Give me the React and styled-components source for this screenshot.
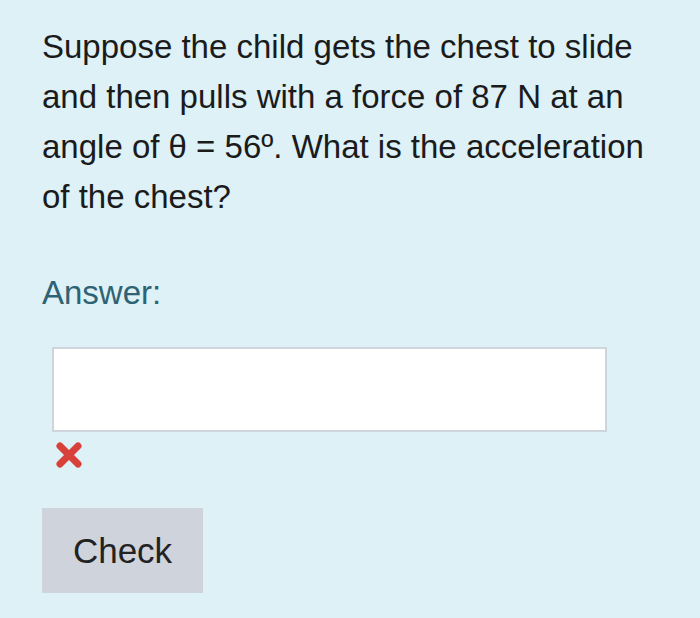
import React from "react";
import styled, { createGlobalStyle } from "styled-components";

const Global = createGlobalStyle`
  html, body {
    margin: 0;
    padding: 0;
    background: #ddf1f7;
  }
  body {
    font-family: "Liberation Sans", Arial, sans-serif;
  }
`;

const Page = styled.div`
  width: 700px;
  height: 618px;
  box-sizing: border-box;
  padding: 22px 20px 0 42px;
  background: #ddf1f7;
  overflow: hidden;
`;

const Question = styled.p`
  margin: 0;
  font-size: 33px;
  line-height: 50px;
  color: #1b1b1b;
  white-space: nowrap;
`;

const Label = styled.div`
  margin-top: 51px;
  font-size: 33px;
  line-height: 40px;
  color: #2d6373;
`;

const Field = styled.input`
  display: block;
  box-sizing: border-box;
  margin: 34px 0 0 10px;
  width: 555px;
  height: 85px;
  border: 2px solid #cfd5dd;
  background: #fff;
  outline: none;
`;

const Feedback = styled.div`
  margin: 9px 0 0 13px;
  height: 28px;
  display: flex;
  align-items: center;
`;

const Button = styled.button`
  margin-top: 39px;
  width: 161px;
  height: 85px;
  border: none;
  background: #cfd3dc;
  font-family: "Liberation Sans", Arial, sans-serif;
  font-size: 35px;
  color: #222;
  cursor: pointer;
`;

const Cross = () => (
  <svg width="28" height="28" viewBox="0 0 28 28">
    <path d="M5 5 L23 23 M23 5 L5 23" stroke="#d8403a" strokeWidth="7" strokeLinecap="round" />
  </svg>
);

export default function App() {
  return (
    <Page>
      <Global />
      <Question>
        Suppose the child gets the chest to slide
        <br />
        and then pulls with a force of 87 N at an
        <br />
        angle of θ = 56º. What is the acceleration
        <br />
        of the chest?
      </Question>
      <Label>Answer:</Label>
      <Field type="text" />
      <Feedback>
        <Cross />
      </Feedback>
      <Button>Check</Button>
    </Page>
  );
}
